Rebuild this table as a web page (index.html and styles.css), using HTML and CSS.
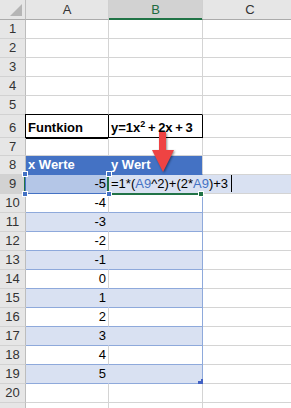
FILE: index.html
```html
<!DOCTYPE html>
<html>
<head>
<meta charset="utf-8">
<link rel="stylesheet" href="styles.css">
</head>
<body>
<div class="wrap">
  <div class="sheet">
    <div class="corner"><svg width="25" height="19" viewBox="0 0 25 19"><polygon points="22,4 22,16 10,16" fill="#b5b5b5"/></svg></div>
    <div class="ch">A</div><div class="ch sel">B</div><div class="ch">C</div>

    <div class="rh">1</div><div class="c"></div><div class="c"></div><div class="c"></div>
    <div class="rh">2</div><div class="c"></div><div class="c"></div><div class="c"></div>
    <div class="rh">3</div><div class="c"></div><div class="c"></div><div class="c"></div>
    <div class="rh">4</div><div class="c"></div><div class="c"></div><div class="c"></div>
    <div class="rh">5</div><div class="c bt"></div><div class="c bt"></div><div class="c"></div>

    <div class="rh tall">6</div>
    <div class="c tall b bx bxl">Funtkion</div>
    <div class="c tall b bx fx">y=1x<span class="sup">2</span> + 2x + 3</div>
    <div class="c"></div>

    <div class="rh">7</div><div class="c"></div><div class="c"></div><div class="c"></div>

    <div class="rh">8</div><div class="c th a">x Werte</div><div class="c th">y Wert</div><div class="c"></div>

    <div class="rh sel">9</div>
    <div class="c num tb a ref">-5<span class="refbox"><span class="h tl"></span><span class="h tr"></span><span class="h bl"></span><span class="h br"></span></span></div>
    <div class="c tb tr edit">=1*(<span class="rf">A9</span>^2)+(2*<span class="rf">A9</span>)+3<span class="caret"></span><span class="fill"></span></div>
    <div class="c editx"></div>

    <div class="rh">10</div><div class="c num tw">-4</div><div class="c tw tr"></div><div class="c"></div>
    <div class="rh">11</div><div class="c num tb a">-3</div><div class="c tb tr"></div><div class="c"></div>
    <div class="rh">12</div><div class="c num tw">-2</div><div class="c tw tr"></div><div class="c"></div>
    <div class="rh">13</div><div class="c num tb a">-1</div><div class="c tb tr"></div><div class="c"></div>
    <div class="rh">14</div><div class="c num tw">0</div><div class="c tw tr"></div><div class="c"></div>
    <div class="rh">15</div><div class="c num tb a">1</div><div class="c tb tr"></div><div class="c"></div>
    <div class="rh">16</div><div class="c num tw">2</div><div class="c tw tr"></div><div class="c"></div>
    <div class="rh">17</div><div class="c num tb a">3</div><div class="c tb tr"></div><div class="c"></div>
    <div class="rh">18</div><div class="c num tw">4</div><div class="c tw tr"></div><div class="c"></div>
    <div class="rh">19</div><div class="c num tb a">5</div><div class="c tb tr rzc"><svg class="rz" width="5" height="5" viewBox="0 0 5 5"><polygon points="3,0 5,0 5,5 0,5 0,2 3,2" fill="#4262c4"/></svg></div><div class="c"></div>
    <div class="rh">20</div><div class="c"></div><div class="c"></div><div class="c"></div>
    <div class="rh"></div><div class="c"></div><div class="c"></div><div class="c"></div>
  </div>

  <svg class="arrow" width="32" height="48" viewBox="0 0 32 48"><polygon points="11,4 18,4 18,22 26,22 15,44 4,22 11,22" fill="#ef4343"/></svg>
</div>
</body>
</html>
```

FILE: styles.css
```css
* { box-sizing: border-box; margin: 0; padding: 0; }
html, body { margin: 0; background: #fff; overflow: hidden; }
body {
  font-family: "Liberation Sans", Arial, sans-serif;
  font-size: 13px;
  color: #000;
}
.wrap { position: relative; width: 298px; height: 408px; overflow: hidden; }
.sheet {
  display: grid;
  grid-template-columns: 26px 83px 94px 95px;
  grid-template-rows: 20px repeat(5, 19px) 23px 18px repeat(14, 19px);
}
.corner { background: #e6e6e6; border-right: 1px solid #bdbdbd; border-bottom: 1px solid #ababab; }
.corner svg { display: block; }
.ch {
  background: #e6e6e6;
  border-right: 1px solid #d0d0d0;
  border-bottom: 1px solid #ababab;
  text-align: center;
  line-height: 19px;
  color: #333;
}
.ch.sel {
  background: #d2d2d2;
  border-bottom-color: #217346;
  box-shadow: inset 0 -1px 0 #217346;
  color: #1d6b40;
}
.rh {
  background: #e6e6e6;
  border-right: 1px solid #bdbdbd;
  border-bottom: 1px solid #d2d2d2;
  text-align: center;
  line-height: 18px;
  color: #333;
}
.rh.sel { background: #d2d2d2; border-right-color: #217346; box-shadow: inset -1px 0 0 #217346; }
.c {
  border-right: 1px solid #d4d4d4;
  border-bottom: 1px solid #d4d4d4;
  padding: 0 2px;
  line-height: 18px;
  white-space: nowrap;
  overflow: hidden;
}
.tall { padding-top: 4px; }
.num { text-align: right; }
.b { font-weight: bold; }
.bt { border-bottom-color: #000; }
.bx { border-right-color: #000; border-bottom-color: #000; }
.bxl { box-shadow: -1px 0 0 #000, -1px -1px 0 #000, -1px 1px 0 #000; }
.fx { word-spacing: -1px; }
.sup { font-size: 9px; vertical-align: 5px; line-height: 0; }

.th { background: #4472c4; color: #fff; font-weight: bold; border-bottom-color: #4472c4; }
.th.a { border-right-color: #4472c4; }
.tb { background: #d9e1f2; border-bottom-color: #8ea9db; }
.tb.a { border-right-color: #d9e1f2; }
.tw { border-bottom-color: #8ea9db; }
.tr { border-right-color: #8ea9db; }

.ref { position: relative; background: #b4c6e7; overflow: visible; }
.refbox {
  position: absolute;
  left: -1px; top: -1px; right: -1px; bottom: -1px;
  border: 1px solid #4472c4;
}
.h {
  position: absolute;
  width: 6px; height: 6px;
  background: #4472c4;
  border: 1px solid #fff;
  z-index: 3;
}
.h.tl { left: -4px; top: -4px; }
.h.tr { right: -4px; top: -4px; }
.h.bl { left: -4px; bottom: -4px; }
.h.br { right: -4px; bottom: -4px; }

.edit {
  position: relative;
  overflow: visible;
  border-right-color: #d9e1f2;
  border-bottom-color: #217346;
  box-shadow: -2px 0 0 #217346, 0 1px 0 #217346;
}
.editx { background: #d9e1f2; }
.rf { color: #4472c4; }
.caret { display: inline-block; width: 1px; height: 17px; background: #000; vertical-align: top; margin-left: 3px; }
.fill {
  position: absolute;
  right: -2px; bottom: -4px;
  width: 6px; height: 6px;
  background: #217346;
  border: 1px solid #fff;
}
.rzc { position: relative; overflow: visible; }
.rz { position: absolute; right: -1px; bottom: -1px; display: block; }

.arrow {
  position: absolute;
  left: 148px; top: 128px;
  filter: drop-shadow(1px 1px 1px rgba(0, 0, 0, 0.45));
}
```
